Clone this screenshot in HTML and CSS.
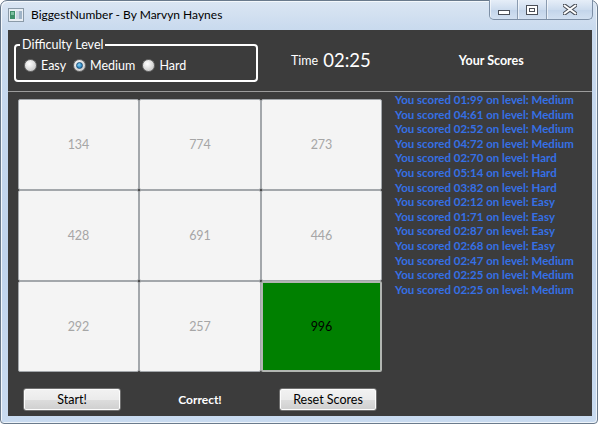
FILE: index.html
```html
<!DOCTYPE html>
<html>
<head>
<meta charset="utf-8">
<link rel="stylesheet" href="styles.css">
</head>
<body>
<div class="window">
  <div class="titlebar">
    <span class="appicon">
      <svg width="16" height="14" viewBox="0 0 16 14">
        <rect x="0.5" y="0.5" width="15" height="13" fill="#e8eef4" stroke="#8a9aa8"/>
        <rect x="2" y="3" width="5" height="8" fill="#3e8f6a"/>
        <rect x="3" y="4" width="3" height="3" fill="#7cc0a0"/>
        <rect x="8" y="3" width="6" height="8" fill="#c9d6e2"/>
        <rect x="11" y="3" width="3" height="8" fill="#9fb4c8"/>
      </svg>
    </span>
    <span class="title">BiggestNumber - By Marvyn Haynes</span>
    <div class="caption">
      <span class="cbtn cmin"><svg width="12" height="5" viewBox="0 0 12 5"><rect x="0.5" y="0.5" width="11" height="4" fill="#fff" stroke="#4a4f58"/></svg></span>
      <span class="cbtn cmax"><svg width="12" height="10" viewBox="0 0 12 10"><rect x="0.5" y="0.5" width="11" height="9" fill="#fff" stroke="#4a4f58"/><rect x="3.5" y="3.5" width="5" height="3" fill="#fdfdfd" stroke="#4a4f58"/></svg></span>
      <span class="cbtn cclose"><svg width="14" height="11" viewBox="0 0 14 11"><path d="M1 1 L13 10 M13 1 L1 10" stroke="#4a4f58" stroke-width="4" stroke-linecap="round"/><path d="M1.5 1.5 L12.5 9.5 M12.5 1.5 L1.5 9.5" stroke="#fff" stroke-width="2" stroke-linecap="round"/></svg></span>
    </div>
  </div>
  <div class="client">
    <div class="top">
      <fieldset class="group">
        <legend>Difficulty Level</legend>
        <div class="radios">
          <span class="radio"><span class="rdot"></span>Easy</span>
          <span class="radio"><span class="rdot on"></span>Medium</span>
          <span class="radio"><span class="rdot"></span>Hard</span>
        </div>
      </fieldset>
      <div class="time"><span class="time-label">Time</span><span class="time-value">02:25</span></div>
      <div class="scores-title">Your Scores</div>
    </div>
    <div class="middle">
      <div class="grid">
        <div class="cell">134</div>
        <div class="cell">774</div>
        <div class="cell">273</div>
        <div class="cell">428</div>
        <div class="cell">691</div>
        <div class="cell">446</div>
        <div class="cell">292</div>
        <div class="cell">257</div>
        <div class="cell win">996</div>
      </div>
      <ul class="scores">
        <li>You scored 01:99 on level: Medium</li>
        <li>You scored 04:61 on level: Medium</li>
        <li>You scored 02:52 on level: Medium</li>
        <li>You scored 04:72 on level: Medium</li>
        <li>You scored 02:70 on level: Hard</li>
        <li>You scored 05:14 on level: Hard</li>
        <li>You scored 03:82 on level: Hard</li>
        <li>You scored 02:12 on level: Easy</li>
        <li>You scored 01:71 on level: Easy</li>
        <li>You scored 02:87 on level: Easy</li>
        <li>You scored 02:68 on level: Easy</li>
        <li>You scored 02:47 on level: Medium</li>
        <li>You scored 02:25 on level: Medium</li>
        <li>You scored 02:25 on level: Medium</li>
      </ul>
    </div>
    <div class="bottom">
      <button class="btn">Start!</button>
      <span class="status">Correct!</span>
      <button class="btn">Reset Scores</button>
    </div>
  </div>
</div>
</body>
</html>
```

FILE: styles.css
```css
html, body {
  margin: 0;
  padding: 0;
  background: #ffffff;
}
body {
  font-family: "Lato", "Open Sans", sans-serif;
  font-size: 12px;
}
.window {
  width: 598px;
  height: 424px;
  box-sizing: border-box;
  border: 1px solid #6a7a8c;
  border-radius: 7px 7px 4px 4px;
  background: linear-gradient(to bottom, #dbe6f3 0px, #c9daee 28px, #bfd3ec 60%, #c9dbf0 100%);
  box-shadow: inset 1px 1px 0 #f4f8fc, inset -1px -1px 0 #eef4fa;
  display: flex;
  flex-direction: column;
  padding: 0 5px 7px 7px;
}
.titlebar {
  height: 29px;
  display: flex;
  align-items: flex-start;
  flex: none;
}
.appicon {
  margin-top: 7px;
  width: 16px;
  height: 14px;
  display: block;
}
.appicon svg { display: block; }
.title {
  margin-left: 7px;
  margin-top: 6px;
  font-size: 12px;
  color: #000;
  line-height: 16px;
}
.caption {
  margin-left: auto;
  margin-top: -1px;
  margin-right: -1px;
  display: flex;
  height: 19px;
  border: 1px solid #7d8fa6;
  border-top: none;
  border-radius: 0 0 5px 5px;
  overflow: hidden;
  background: linear-gradient(to bottom, #e6eef8, #cddcee 50%, #c2d4ea 51%, #d2e0f1);
}
.cbtn {
  display: flex;
  align-items: center;
  justify-content: center;
  height: 19px;
  box-shadow: inset 1px 0 0 rgba(255,255,255,0.6);
}
.cmin { width: 27px; border-right: 1px solid #8a9bb0; }
.cmin svg { margin-top: 6px; }
.cmax { width: 28px; border-right: 1px solid #8a9bb0; }
.cclose { width: 45px; }

.client {
  flex: 1;
  background: #3c3c3c;
  display: flex;
  flex-direction: column;
  color: #fff;
}
.top {
  height: 61px;
  flex: none;
  border-bottom: 1px solid #9c9c9c;
  display: flex;
  align-items: flex-start;
}
.group {
  margin: 8px 0 0 6px;
  width: 244px;
  height: 44px;
  box-sizing: border-box;
  border: 2px solid #ffffff;
  border-radius: 4px;
  padding: 0 0 0 4px;
}
.group legend {
  padding: 0 2px;
  line-height: 14px;
  font-size: 12.5px;
  color: #fff;
}
.radios {
  display: flex;
  align-items: center;
  margin-top: 6px;
}
.radio {
  display: flex;
  align-items: center;
  font-size: 12.5px;
  color: #fff;
  margin-right: 7px;
}
.radio:first-child { margin-left: 4px; }
.rdot {
  width: 11px;
  height: 11px;
  border-radius: 50%;
  border: 1px solid #6d6d6d;
  background: radial-gradient(circle at 40% 35%, #ffffff 0, #e4e4e4 40%, #b8b8b8 100%);
  margin-right: 4px;
  display: flex;
  align-items: center;
  justify-content: center;
}
.rdot.on::after {
  content: "";
  width: 5px;
  height: 5px;
  border-radius: 50%;
  border: 1px solid #1b4f78;
  background: radial-gradient(circle at 40% 35%, #8ad2f4 0, #2f8ac4 60%, #1d5a8a 100%);
}
.time {
  margin: 16px 0 0 33px;
  display: flex;
  align-items: center;
  height: 28px;
}
.time-label {
  font-size: 12.5px;
  color: #fff;
}
.time-value {
  margin-left: 5px;
  font-size: 18.5px;
  color: #fff;
}
.scores-title {
  margin: 23px 0 0 88px;
  font-weight: bold;
  font-size: 12.5px;
  color: #fff;
}
.middle {
  flex: 1;
  display: flex;
  align-items: flex-start;
  padding-left: 10px;
}
.grid {
  margin-top: 7px;
  display: grid;
  grid-template-columns: 121px 122px 121px;
  grid-template-rows: 91px 91px 91px;
}
.cell {
  box-sizing: border-box;
  border: 1px solid #a3a7ab;
  border-radius: 2px;
  background: #f4f4f4;
  display: flex;
  align-items: center;
  justify-content: center;
  color: #a6a6a6;
  font-size: 12.5px;
}
.cell.win {
  background: #008000;
  border: 2px solid #b2b6b2;
  color: #000;
}
.scores {
  list-style: none;
  margin: 1px 0 0 13px;
  padding: 0;
}
.scores li {
  font-weight: bold;
  font-size: 11.5px;
  line-height: 14.6px;
  color: #3570e6;
  white-space: nowrap;
}
.bottom {
  flex: none;
  display: flex;
  align-items: center;
  padding: 0 0 5px 15px;
}
.btn {
  width: 98px;
  height: 23px;
  box-sizing: border-box;
  border: 1px solid #707070;
  border-radius: 3px;
  background: linear-gradient(to bottom, #f2f2f2 0, #ebebeb 50%, #dddddd 51%, #cfcfcf 100%);
  box-shadow: inset 0 0 0 1px #fcfcfc;
  font-family: "Lato", "Open Sans", sans-serif;
  font-size: 12.5px;
  color: #000;
  padding: 0;
}
.status {
  width: 158px;
  text-align: center;
  font-weight: bold;
  font-size: 12px;
  color: #fff;
}
```
